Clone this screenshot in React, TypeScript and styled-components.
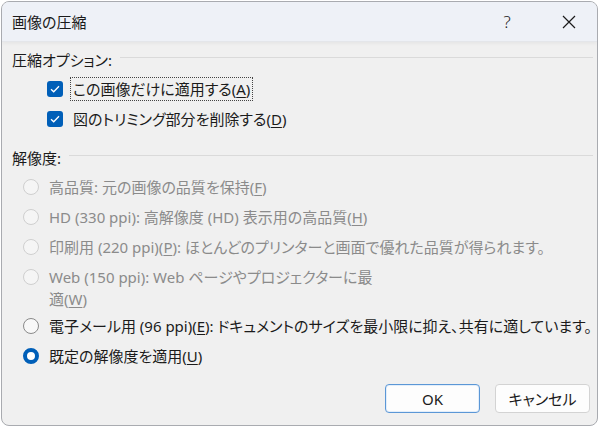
import React from 'react'
import styled, { createGlobalStyle, css } from 'styled-components'

const GlobalStyle = createGlobalStyle`
  html, body {
    margin: 0;
    padding: 0;
    background: #ffffff;
  }
  body {
    font-family: "Noto Sans", "Noto Sans CJK JP", sans-serif;
    font-feature-settings: "palt";
    color: #1b1b1b;
  }
`

const Window = styled.div`
  box-sizing: border-box;
  width: 597px;
  height: 425px;
  margin: 1px 0 0 1px;
  border: 1px solid #a9abb0;
  border-radius: 8px;
  background: #f0f0f0;
  overflow: hidden;
  display: flex;
  flex-direction: column;
`

const TitleBar = styled.div`
  height: 39px;
  flex-shrink: 0;
  display: flex;
  align-items: center;
  padding-left: 10px;
  background: #eef1f7;
  border-bottom: 1px solid #e4e6ea;
  box-shadow: 0 2px 3px rgba(0, 0, 0, 0.04);
`

const Title = styled.div`
  flex: 1;
  font-size: 15px;
  padding-bottom: 1px;
`

const TitleButton = styled.button<{ $gap?: number }>`
  width: 56px;
  height: 39px;
  margin-right: ${p => p.$gap ?? 0}px;
  border: none;
  background: transparent;
  display: flex;
  align-items: center;
  justify-content: center;
  padding: 0;
  color: #1b1b1b;
  font-family: "Noto Sans", sans-serif;
  font-size: 17px;
  font-weight: 300;
`

const Body = styled.div`
  flex: 1;
  display: flex;
  flex-direction: column;
  padding: 2px 4px 12px 10px;
`

const GroupHeader = styled.div<{ $top?: number }>`
  height: 30px;
  margin-top: ${p => p.$top ?? 0}px;
  display: flex;
  align-items: center;
  gap: 8px;
  font-size: 15px;

  &::after {
    content: '';
    flex: 1;
    height: 1px;
    margin-top: -3px;
    background: #dadada;
  }
`

const Row = styled.div<{ $indent: number }>`
  min-height: 30px;
  box-sizing: border-box;
  padding-top: 4px;
  padding-left: ${p => p.$indent}px;
  display: flex;
  align-items: flex-start;
`

const CheckBox = styled.span`
  width: 16px;
  height: 16px;
  margin-top: 3px;
  margin-right: 10px;
  border-radius: 3px;
  background: #005fb8;
  display: flex;
  align-items: center;
  justify-content: center;
  flex-shrink: 0;
`

const Radio = styled.span<{ $state: 'off' | 'on' | 'disabled' }>`
  box-sizing: border-box;
  width: 16px;
  height: 16px;
  margin-top: 3px;
  margin-right: 10px;
  border-radius: 50%;
  flex-shrink: 0;
  ${p =>
    p.$state === 'disabled' &&
    css`
      border: 1px solid #cfcfcf;
      background: #f5f5f5;
    `}
  ${p =>
    p.$state === 'off' &&
    css`
      border: 1px solid #8a8a8a;
      background: #f8f8f8;
    `}
  ${p =>
    p.$state === 'on' &&
    css`
      border: 4px solid #005fb8;
      background: #ffffff;
    `}
`

const Label = styled.span<{ $disabled?: boolean; $focused?: boolean }>`
  font-size: 15px;
  line-height: 22px;
  color: ${p => (p.$disabled ? '#8b8b8b' : '#1b1b1b')};
  white-space: nowrap;
  border: 1px dotted ${p => (p.$focused ? '#444444' : 'transparent')};
  margin: -1px 0 0 -3px;
  padding: 0 2px;

  u {
    text-underline-offset: 2px;
  }
`

const Footer = styled.div`
  margin-top: auto;
  display: flex;
  justify-content: flex-end;
  gap: 15px;
  padding-right: 3px;
`

const Button = styled.button<{ $primary?: boolean }>`
  width: 95px;
  height: 29px;
  border-radius: 4px;
  border: 1px solid ${p => (p.$primary ? '#5b97d6' : '#d3d3d3')};
  box-shadow: ${p => (p.$primary ? 'inset 0 0 0 1px #e3eefa' : 'none')};
  background: #fdfdfd;
  font-family: "Noto Sans", "Noto Sans CJK JP", sans-serif;
  font-feature-settings: "palt";
  font-size: 15px;
  color: #1b1b1b;
  padding: 0;
`

const Check = () => (
  <svg width="10" height="8" viewBox="0 0 10 8">
    <path d="M1 4.2 L3.7 6.8 L9 1.2" fill="none" stroke="#ffffff" strokeWidth="1.3" />
  </svg>
)

const CloseIcon = () => (
  <svg width="14" height="14" viewBox="0 0 14 14">
    <path d="M1 1 L13 13 M13 1 L1 13" stroke="#1b1b1b" strokeWidth="1.2" />
  </svg>
)

type Res = {
  state: 'off' | 'on' | 'disabled'
  text: React.ReactNode
}

const resolutions: Res[] = [
  { state: 'disabled', text: <>高品質: 元の画像の品質を保持(<u>F</u>)</> },
  { state: 'disabled', text: <>HD (330 ppi): 高解像度 (HD) 表示用の高品質(<u>H</u>)</> },
  {
    state: 'disabled',
    text: <>印刷用 (220 ppi)(<u>P</u>): ほとんどのプリンターと画面で優れた品質が得られます。</>,
  },
  {
    state: 'disabled',
    text: (
      <>
        Web (150 ppi): Web ページやプロジェクターに最
        <br />
        適(<u>W</u>)
      </>
    ),
  },
  {
    state: 'off',
    text: <>電子メール用 (96 ppi)(<u>E</u>): ドキュメントのサイズを最小限に抑え、共有に適しています。</>,
  },
  { state: 'on', text: <>既定の解像度を適用(<u>U</u>)</> },
]

export default function App() {
  return (
    <>
      <GlobalStyle />
      <Window>
        <TitleBar>
          <Title>画像の圧縮</Title>
          <TitleButton $gap={6}>?</TitleButton>
          <TitleButton>
            <CloseIcon />
          </TitleButton>
        </TitleBar>
        <Body>
          <GroupHeader>圧縮オプション:</GroupHeader>
          <Row $indent={35}>
            <CheckBox>
              <Check />
            </CheckBox>
            <Label $focused>
              この画像だけに適用する(<u>A</u>)
            </Label>
          </Row>
          <Row $indent={35}>
            <CheckBox>
              <Check />
            </CheckBox>
            <Label>
              図のトリミング部分を削除する(<u>D</u>)
            </Label>
          </Row>
          <GroupHeader $top={8}>解像度:</GroupHeader>
          {resolutions.map((r, i) => (
            <Row key={i} $indent={11}>
              <Radio $state={r.state} />
              <Label $disabled={r.state === 'disabled'}>{r.text}</Label>
            </Row>
          ))}
          <Footer>
            <Button $primary>OK</Button>
            <Button>キャンセル</Button>
          </Footer>
        </Body>
      </Window>
    </>
  )
}
